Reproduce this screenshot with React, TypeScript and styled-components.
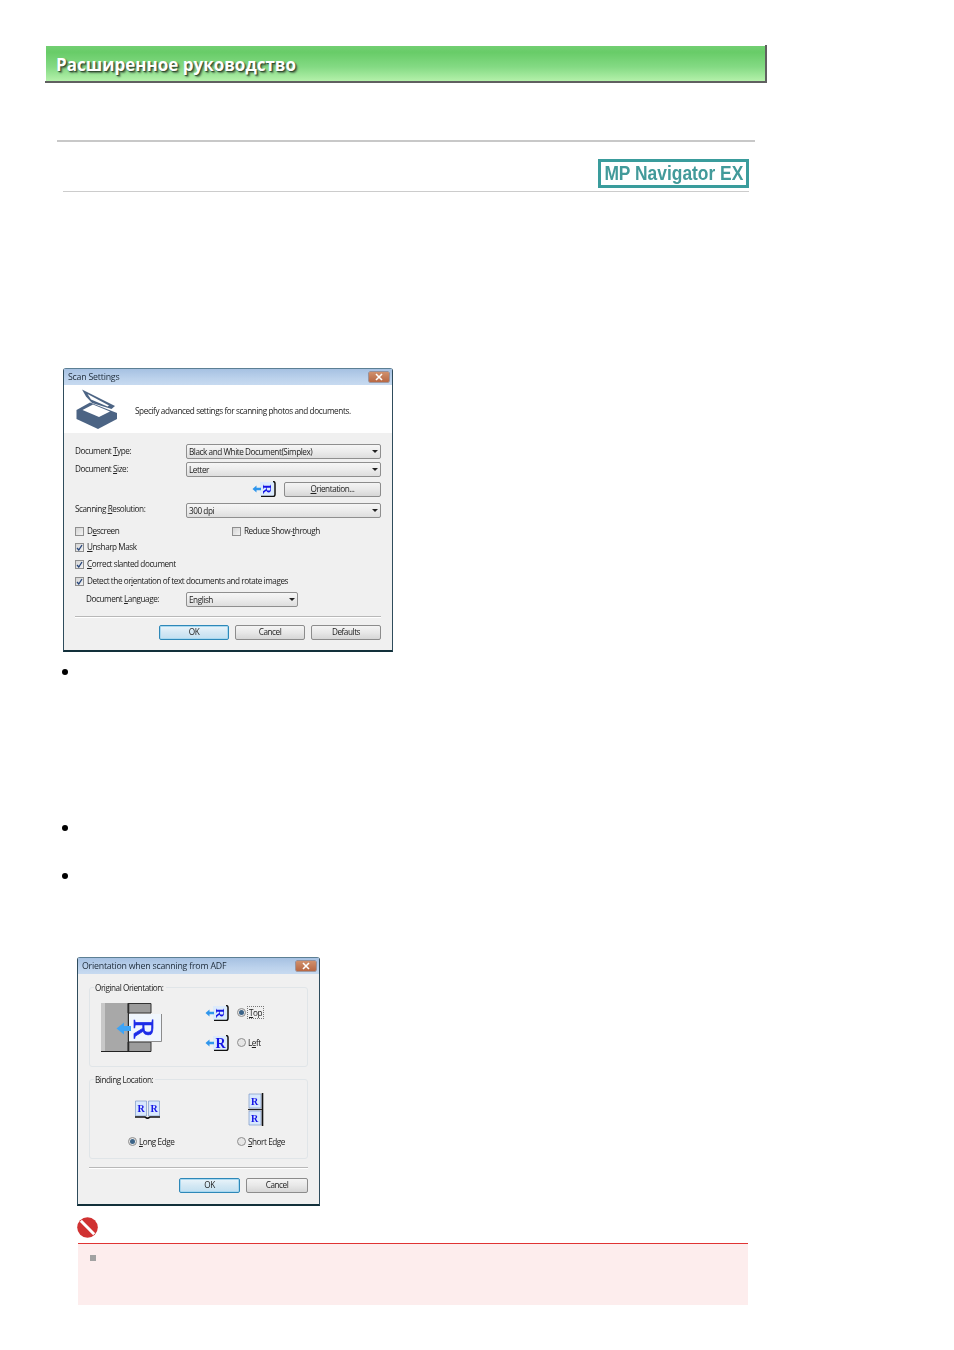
import React from "react";
import styled, { createGlobalStyle } from "styled-components";

const GlobalStyle = createGlobalStyle`
  html, body { margin: 0; padding: 0; background: #ffffff; }
  body { font-family: "Liberation Sans", Arial, sans-serif; }
`;

const Page = styled("div")`
  width: 954px;
  min-height: 1350px;
  overflow: hidden;
`;

const Banner = styled("div")`
  box-sizing: border-box;
  width: 722px;
  height: 38px;
  margin: 45px 0 0 45px;
  padding: 1px 0 0 1px;
  border-right: 2px solid #606060;
  border-bottom: 2px solid #606060;
`;

const BannerFill = styled("div")`
  height: 100%;
  padding-left: 10px;
  background: linear-gradient(to bottom, #72cf72 0%, #68cc68 18%, #84da84 60%, #b4f1aa 100%);
  color: #ffffff;
  font-family: "Open Sans", "Noto Sans", sans-serif;
  font-weight: 700;
  font-size: 17px;
  line-height: 37px;
  text-shadow: 1px 1px 1px #2c4a2c, 2px 2px 2px #5a7a5a;
  white-space: nowrap;
`;

const TopRule = styled("div")`
  width: 698px;
  height: 2px;
  margin: 57px 0 0 57px;
  background: #c8c8c8;
`;

const TitleRow = styled("div")`
  display: flex;
  justify-content: flex-end;
  width: 686px;
  margin: 17px 0 0 63px;
  padding-bottom: 3px;
  border-bottom: 1px solid #cccccc;
`;

const ProductBadge = styled("div")`
  box-sizing: border-box;
  display: flex;
  justify-content: center;
  width: 151px;
  height: 29px;
  border: 3px solid #3a9c9c;
  color: #429a9a;
  font-weight: 700;
  font-size: 20px;
  line-height: 23px;
  white-space: nowrap;
`;

const BadgeText = styled("span")`
  display: inline-block;
  transform: scaleX(0.87);
  filter: blur(0.3px);
`;

const Dialog = styled("div")<{ $width: number; $top: number; $left: number }>`
  box-sizing: border-box;
  width: ${(p) => p.$width}px;
  margin: ${(p) => p.$top}px 0 0 ${(p) => p.$left}px;
  border: 1px solid #5c7f94;
  border-bottom: 2px solid #12303a;
  border-left-color: #2f4c5c;
  border-right-color: #2f4c5c;
  border-radius: 3px 3px 0 0;
  background: #f0f0f0;
  color: #222222;
  font-family: "Open Sans", "Noto Sans", sans-serif;
  font-size: 8.2px;
  letter-spacing: -0.45px;
  filter: blur(0.4px);
`;

const TitleBar = styled("div")`
  display: flex;
  align-items: center;
  justify-content: space-between;
  height: 16px;
  padding: 0 3px 0 4px;
  background: linear-gradient(to bottom, #a6c1e2, #bcd2ec 60%, #c7daf0);
  font-size: 8.8px;
  letter-spacing: -0.22px;
  color: #1c2a38;
`;

const CloseButton = styled("span")`
  display: flex;
  align-items: center;
  justify-content: center;
  width: 20px;
  height: 10px;
  border-radius: 1px;
  background: linear-gradient(to bottom, #d0906c, #b86844);
  box-shadow: 0 0 0 0.5px #7e5a50;
`;

const IntroBand = styled("div")`
  display: flex;
  align-items: center;
  height: 48px;
  padding-left: 12px;
  background: #ffffff;
  letter-spacing: -0.4px;
`;

const IntroText = styled("span")`
  margin: 3px 0 0 17px;
`;

const DialogBody = styled("div")`
  display: flex;
  flex-direction: column;
  padding: 11px 11px 10px 11px;
`;

const FormRow = styled("div")<{ $top?: number; $indent?: number }>`
  display: grid;
  grid-template-columns: ${(p) => 111 - (p.$indent ?? 0)}px 1fr;
  align-items: center;
  margin: ${(p) => p.$top ?? 0}px 0 0 ${(p) => p.$indent ?? 0}px;
`;

const FieldLabel = styled("span")<{ $lift?: number }>`
  margin-top: -${(p) => p.$lift ?? 2}px;
  white-space: nowrap;
`;

const Select = styled("div")<{ $width?: number }>`
  box-sizing: border-box;
  display: flex;
  align-items: center;
  justify-content: space-between;
  width: ${(p) => (p.$width ? `${p.$width}px` : "100%")};
  height: 15px;
  padding: 0 2px 0 2px;
  border: 1px solid #8f8f8f;
  border-radius: 2px;
  background: linear-gradient(to bottom, #f6f6f6, #ececec 50%, #dedede);
  white-space: nowrap;
`;

const Caret = styled("span")`
  width: 0;
  height: 0;
  border-left: 3px solid transparent;
  border-right: 3px solid transparent;
  border-top: 3.5px solid #222222;
`;

const OrientRow = styled("div")`
  display: flex;
  justify-content: flex-end;
  align-items: center;
  gap: 8px;
  height: 16px;
  margin-top: 4px;
`;

const PushButton = styled("div")<{ $width: number; $primary?: boolean }>`
  box-sizing: border-box;
  width: ${(p) => p.$width}px;
  height: 15px;
  border: 1px solid ${(p) => (p.$primary ? "#2e88b8" : "#8c8c8c")};
  border-radius: 2px;
  background: ${(p) =>
    p.$primary
      ? "linear-gradient(to bottom, #eaf4fa, #d4e8f4 50%, #c2dff0)"
      : "linear-gradient(to bottom, #f4f4f4, #e8e8e8 50%, #d6d6d6)"};
  box-shadow: ${(p) => (p.$primary ? "inset 0 0 0 1px #a8d8f0" : "none")};
  line-height: 12px;
  text-align: center;
`;

const CheckLine = styled("div")<{ $top: number }>`
  display: flex;
  align-items: center;
  height: 12px;
  margin-top: ${(p) => p.$top}px;
`;

const CheckCell = styled("div")<{ $width?: number }>`
  display: flex;
  align-items: center;
  gap: 3px;
  width: ${(p) => (p.$width ? `${p.$width}px` : "auto")};
  white-space: nowrap;
`;

const CheckText = styled("span")`
  margin-top: -1px;
`;

const CheckBox = styled("span")`
  box-sizing: border-box;
  display: flex;
  align-items: center;
  justify-content: center;
  width: 9px;
  height: 9px;
  border: 1px solid #8e8e8e;
  background: linear-gradient(135deg, #d4d4d4, #f2f2f2);
`;

const Separator = styled("div")<{ $top: number }>`
  height: 1px;
  margin-top: ${(p) => p.$top}px;
  background: #b8b8b8;
  box-shadow: 0 1px 0 #ffffff;
`;

const ButtonRow = styled("div")<{ $top: number; $gap: number }>`
  display: flex;
  justify-content: flex-end;
  gap: ${(p) => p.$gap}px;
  margin-top: ${(p) => p.$top}px;
`;

const Dot = styled("div")<{ $top: number }>`
  width: 6px;
  height: 6px;
  margin: ${(p) => p.$top}px 0 0 62px;
  border-radius: 50%;
  background: #000000;
`;

const OrientBody = styled("div")`
  display: flex;
  flex-direction: column;
  padding: 13px 11px 11px 11px;
`;

const Group = styled("div")<{ $height: number; $top?: number }>`
  position: relative;
  box-sizing: border-box;
  height: ${(p) => p.$height}px;
  margin-top: ${(p) => p.$top ?? 0}px;
  border: 1px solid #e0e5e8;
  border-radius: 3px;
`;

const GroupLegend = styled("span")`
  position: absolute;
  top: -5px;
  left: 4px;
  padding: 0 2px 0 1px;
  background: #f0f0f0;
  line-height: 10px;
`;

const OriginalLayout = styled("div")`
  display: flex;
  padding: 15px 0 0 11px;
`;

const OptionColumn = styled("div")`
  display: flex;
  flex-direction: column;
  gap: 14px;
  margin: 2px 0 0 43px;
`;

const OptionRow = styled("div")`
  display: flex;
  align-items: center;
  height: 16px;
`;

const RadioLabel = styled("div")`
  display: flex;
  align-items: center;
  gap: 2px;
  height: 12px;
  white-space: nowrap;
`;

const OptionRadio = styled(RadioLabel)`
  margin: -2px 0 0 8px;
`;

const Radio = styled("span")<{ $on?: boolean }>`
  box-sizing: border-box;
  display: flex;
  align-items: center;
  justify-content: center;
  width: 9px;
  height: 9px;
  border: 1px solid #8e8e8e;
  border-radius: 50%;
  background: #e6e6e6;

  &::after {
    content: "";
    display: ${(p) => (p.$on ? "block" : "none")};
    width: 5px;
    height: 5px;
    border-radius: 50%;
    background: #3c6488;
  }
`;

const FocusLabel = styled("span")`
  padding: 0 1px;
  outline: 1px dotted #777777;
`;

const BindingLayout = styled("div")`
  display: grid;
  grid-template-columns: 109px 1fr;
  padding: 13px 0 0 38px;
`;

const BindingCell = styled("div")`
  display: flex;
  flex-direction: column;
`;

const IconSlot = styled("div")`
  display: flex;
  align-items: center;
  justify-content: center;
  width: 38px;
  height: 33px;
  margin-bottom: 9px;
`;

const NoteIcon = styled("svg")`
  display: block;
  margin: 11px 0 0 77px;
`;

const NoteBox = styled("div")`
  box-sizing: border-box;
  width: 670px;
  height: 62px;
  margin: 5px 0 0 78px;
  padding: 11px 0 0 12px;
  border-top: 1px solid #e03434;
  background: #fdeded;
`;

const NoteMark = styled("div")`
  width: 6px;
  height: 6px;
  background: #a2a2a2;
`;

const GlyphR = styled("text")`
  font-family: "Liberation Serif", serif;
  font-weight: 700;
  letter-spacing: 0;
  fill: #1414e6;
`;

const LargeR = styled(GlyphR)`
  font-weight: 400;
  fill: #1c2ce8;
  stroke: #1c2ce8;
  stroke-width: 0.7;
`;

const CloseCross = () => (
  <svg width="10" height="8" viewBox="0 0 10 8">
    <path d="M2 1 L8 7 M8 1 L2 7" stroke="#ffffff" strokeWidth="1.6" />
  </svg>
);

const Tick = () => (
  <svg width="7" height="7" viewBox="0 0 7 7">
    <path d="M1 4 L2.8 6 L6 1" fill="none" stroke="#26457a" strokeWidth="1.3" />
  </svg>
);

const ScannerIcon = () => (
  <svg width="42" height="40" viewBox="0 0 42 40">
    <path d="M0.5 21 L14 13.5 L41 24 L41 30 L22 40 L0.5 30 Z" fill="#4c6484" />
    <path d="M6.5 21 L17 15.5 L34 22.5 L23 28 Z" fill="#ffffff" />
    <path d="M6 0.5 L39 17 L35.5 20 L16 14 L10 7.5 Z" fill="#4c6484" />
    <path d="M11.5 5 L33 16.5 L31.5 17.5 L15 10.5 Z" fill="#ffffff" />
  </svg>
);

// small page with an arrow, the R lies on its side when rotated is set
const PageArrow = ({ rotated }: { rotated?: boolean }) => (
  <svg width="24" height="16" viewBox="0 0 24 16">
    <path d="M8 1 H22 V15 H8 Z" fill="#dcebfc" />
    <path d="M21 0.5 Q23 0.5 23 2.5 V13.5 Q23 15.5 21 15.5 H9" fill="none" stroke="#111111" strokeWidth="1.5" />
    <path d="M0.5 8 L4.5 4.5 V6.7 H9 V9.3 H4.5 V11.5 Z" fill="#2f96ec" />
    {rotated ? (
      <GlyphR fontSize="13" transform="translate(11 3.5) rotate(90)" x="0" y="0">
        R
      </GlyphR>
    ) : (
      <GlyphR fontSize="14" x="10.5" y="13">
        R
      </GlyphR>
    )}
  </svg>
);

const FeederIcon = () => (
  <svg width="61" height="49" viewBox="0 0 61 49">
    <rect x="0" y="0" width="27" height="49" fill="#a8a8a8" />
    <rect x="0" y="0" width="4" height="48" fill="#c8c8c8" />
    <path d="M27 0.5 H50 V10 H27 Z M27 39 H50 V48.5 H27 Z" fill="#9c9c9c" stroke="#333333" strokeWidth="1" />
    <path d="M27.5 0 V49" stroke="#2a2a2a" strokeWidth="1.5" />
    <path d="M0 48.5 H50" stroke="#222222" strokeWidth="1.2" />
    <path d="M28 11 H60 V38 H28 Z" fill="#f0f6fd" />
    <path d="M60.5 11 V38.5 H28" fill="none" stroke="#8c8c8c" strokeWidth="1" />
    <path d="M15.5 25.5 L23 19.5 V23 H30 V28 H23 V31.5 Z" fill="#3ea4f6" />
    <LargeR fontSize="29" transform="translate(33 16) rotate(90)" x="0" y="0">
      R
    </LargeR>
  </svg>
);

const BookIcon = () => (
  <svg width="25" height="19" viewBox="0 0 25 19">
    <path d="M0.5 1 H11.5 V16 H0.5 Z M13.5 1 H24.5 V16 H13.5 Z" fill="#d8e8fc" stroke="#6c8cc0" strokeWidth="0.6" />
    <path d="M0 17 H10 L12.5 18.5 L15 17 H25" fill="none" stroke="#111111" strokeWidth="1.6" />
    <GlyphR fontSize="10" x="2.5" y="12">
      R
    </GlyphR>
    <GlyphR fontSize="10" x="15.5" y="12">
      R
    </GlyphR>
  </svg>
);

const StackIcon = () => (
  <svg width="16" height="33" viewBox="0 0 16 33">
    <path d="M1 1 H13 V15 H1 Z M1 18 H13 V32 H1 Z" fill="#d8e8fc" stroke="#6c8cc0" strokeWidth="0.6" />
    <path d="M14.5 0 V33" stroke="#111111" strokeWidth="1.6" />
    <path d="M0 16.5 H14" stroke="#222222" strokeWidth="1.2" />
    <GlyphR fontSize="10" x="3" y="12">
      R
    </GlyphR>
    <GlyphR fontSize="10" x="3" y="29">
      R
    </GlyphR>
  </svg>
);

export default function App() {
  return (
    <Page>
      <GlobalStyle />
      <Banner>
        <BannerFill>Расширенное руководство</BannerFill>
      </Banner>
      <TopRule />
      <TitleRow>
        <ProductBadge>
          <BadgeText>MP Navigator EX</BadgeText>
        </ProductBadge>
      </TitleRow>

      <Dialog $width={330} $top={176} $left={63}>
        <TitleBar>
          <span>Scan Settings</span>
          <CloseButton>
            <CloseCross />
          </CloseButton>
        </TitleBar>
        <IntroBand>
          <ScannerIcon />
          <IntroText>Specify advanced settings for scanning photos and documents.</IntroText>
        </IntroBand>
        <DialogBody>
          <FormRow>
            <FieldLabel>
              Document <u>T</u>ype:
            </FieldLabel>
            <Select>
              Black and White Document(Simplex)
              <Caret />
            </Select>
          </FormRow>
          <FormRow $top={3}>
            <FieldLabel>
              Document <u>S</u>ize:
            </FieldLabel>
            <Select>
              Letter
              <Caret />
            </Select>
          </FormRow>
          <OrientRow>
            <PageArrow rotated />
            <PushButton $width={97}>
              <u>O</u>rientation...
            </PushButton>
          </OrientRow>
          <FormRow $top={6}>
            <FieldLabel $lift={5}>
              Scanning <u>R</u>esolution:
            </FieldLabel>
            <Select>
              300 dpi
              <Caret />
            </Select>
          </FormRow>
          <CheckLine $top={7}>
            <CheckCell $width={157}>
              <CheckBox />
              <CheckText>
                D<u>e</u>screen
              </CheckText>
            </CheckCell>
            <CheckCell>
              <CheckBox />
              <CheckText>
                Reduce Show-<u>t</u>hrough
              </CheckText>
            </CheckCell>
          </CheckLine>
          <CheckLine $top={4}>
            <CheckCell>
              <CheckBox>
                <Tick />
              </CheckBox>
              <CheckText>
                <u>U</u>nsharp Mask
              </CheckText>
            </CheckCell>
          </CheckLine>
          <CheckLine $top={5}>
            <CheckCell>
              <CheckBox>
                <Tick />
              </CheckBox>
              <CheckText>
                <u>C</u>orrect slanted document
              </CheckText>
            </CheckCell>
          </CheckLine>
          <CheckLine $top={5}>
            <CheckCell>
              <CheckBox>
                <Tick />
              </CheckBox>
              <CheckText>
                Detect the or<u>i</u>entation of text documents and rotate images
              </CheckText>
            </CheckCell>
          </CheckLine>
          <FormRow $top={5} $indent={11}>
            <FieldLabel $lift={3}>
              Document <u>L</u>anguage:
            </FieldLabel>
            <Select $width={112}>
              English
              <Caret />
            </Select>
          </FormRow>
          <Separator $top={9} />
          <ButtonRow $top={8} $gap={6}>
            <PushButton $width={70} $primary>
              OK
            </PushButton>
            <PushButton $width={70}>Cancel</PushButton>
            <PushButton $width={70}>Defaults</PushButton>
          </ButtonRow>
        </DialogBody>
      </Dialog>

      <Dot $top={17} />
      <Dot $top={150} />
      <Dot $top={42} />

      <Dialog $width={243} $top={78} $left={77}>
        <TitleBar>
          <span>Orientation when scanning from ADF</span>
          <CloseButton>
            <CloseCross />
          </CloseButton>
        </TitleBar>
        <OrientBody>
          <Group $height={80}>
            <GroupLegend>Original Orientation:</GroupLegend>
            <OriginalLayout>
              <FeederIcon />
              <OptionColumn>
                <OptionRow>
                  <PageArrow rotated />
                  <OptionRadio>
                    <Radio $on />
                    <FocusLabel>
                      <u>T</u>op
                    </FocusLabel>
                  </OptionRadio>
                </OptionRow>
                <OptionRow>
                  <PageArrow />
                  <OptionRadio>
                    <Radio />
                    <span>
                      L<u>e</u>ft
                    </span>
                  </OptionRadio>
                </OptionRow>
              </OptionColumn>
            </OriginalLayout>
          </Group>
          <Group $height={80} $top={12}>
            <GroupLegend>Binding Location:</GroupLegend>
            <BindingLayout>
              <BindingCell>
                <IconSlot>
                  <BookIcon />
                </IconSlot>
                <RadioLabel>
                  <Radio $on />
                  <span>
                    <u>L</u>ong Edge
                  </span>
                </RadioLabel>
              </BindingCell>
              <BindingCell>
                <IconSlot>
                  <StackIcon />
                </IconSlot>
                <RadioLabel>
                  <Radio />
                  <span>
                    <u>S</u>hort Edge
                  </span>
                </RadioLabel>
              </BindingCell>
            </BindingLayout>
          </Group>
          <Separator $top={8} />
          <ButtonRow $top={10} $gap={6}>
            <PushButton $width={61} $primary>
              OK
            </PushButton>
            <PushButton $width={62}>Cancel</PushButton>
          </ButtonRow>
        </OrientBody>
      </Dialog>

      <NoteIcon width="21" height="21" viewBox="0 0 21 21">
        <circle cx="10.5" cy="10.5" r="10.3" fill="#d03232" />
        <path d="M3.8 3.8 L17.2 17.2" stroke="#ffffff" strokeWidth="3" />
      </NoteIcon>
      <NoteBox>
        <NoteMark />
      </NoteBox>
    </Page>
  );
}
